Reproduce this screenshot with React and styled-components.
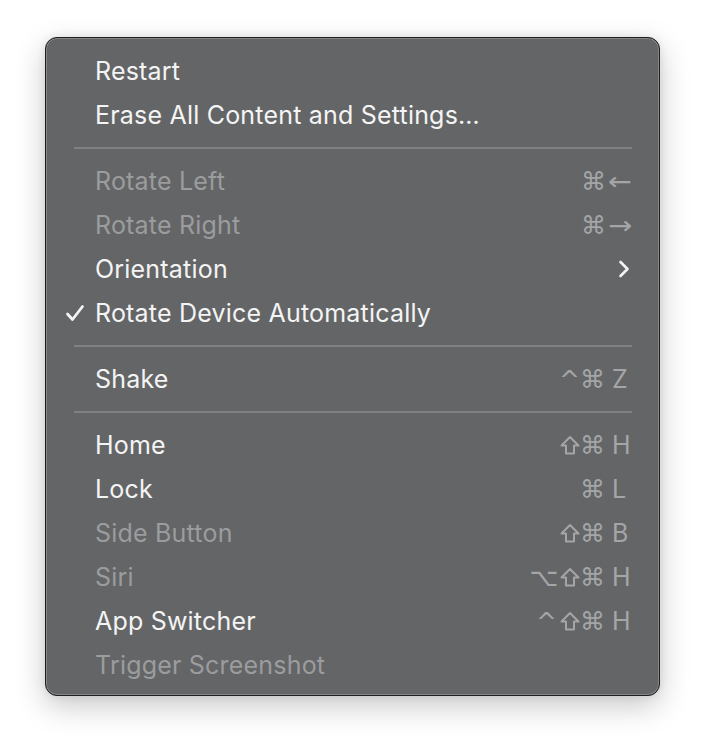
import styled, { createGlobalStyle } from 'styled-components'

const Global = createGlobalStyle`
    html, body {
        margin: 0;
        padding: 0;
        background: #ffffff;
    }
    body {
        font-family: Inter, "Noto Sans", "Liberation Sans", sans-serif;
    }
`

const Page = styled.div`
    width: 706px;
    height: 750px;
    padding: 37px 0 0 45px;
    box-sizing: border-box;
`

const Menu = styled.div`
    width: 615px;
    height: 659px;
    box-sizing: border-box;
    background: #646567;
    border: 1px solid #1f1f20;
    border-radius: 12px;
    box-shadow: inset 0 0 0 1px #85868a, 0 10px 30px rgba(0, 0, 0, 0.22), 0 0 8px rgba(0, 0, 0, 0.08);
    padding: 11px 0 8px;
    display: flex;
    flex-direction: column;
`

const Row = styled.div`
    height: 44px;
    display: flex;
    align-items: center;
    padding: 0 27px 0 49px;
    position: relative;
    color: ${p => (p.$disabled ? '#9b9c9e' : '#f4f4f4')};
    font-size: 25px;
    letter-spacing: 0.2px;
`

const Label = styled.span`
    flex: 1;
`

const Check = styled.svg`
    position: absolute;
    left: 19px;
    top: 13px;
`

const Separator = styled.div`
    height: 22px;
    display: flex;
    align-items: center;
    padding: 0 27px 0 28px;
    &::after {
        content: '';
        flex: 1;
        height: 2px;
        background: #808184;
    }
`

const Shortcut = styled.span`
    display: flex;
    align-items: center;
    gap: 2px;
    color: #a4a5a7;
    font-family: "DejaVu Sans", sans-serif;
    font-size: 25px;
    letter-spacing: 0;
`

const Key = styled.span`
    width: ${p => (p.$wide ? '26px' : '21px')};
    display: flex;
    justify-content: center;
`

const Letter = styled.span`
    width: 20px;
    margin-left: 7px;
    font-family: Inter, "Liberation Sans", sans-serif;
    font-size: 25px;
    text-align: left;
`

const Arrow = styled.span`
    width: 26px;
    text-align: right;
    transform: scaleX(1.15);
    transform-origin: right center;
`

const ShiftIcon = () => (
    <svg width="20" height="20" viewBox="0 0 20 20">
        <path d="M10 2 L18.5 10.5 L14 10.5 L14 18.5 L6 18.5 L6 10.5 L1.5 10.5 Z" fill="none" stroke="#a4a5a7" strokeWidth="2" strokeLinejoin="round" />
    </svg>
)

const Chevron = () => (
    <svg width="12" height="18" viewBox="0 0 12 18" style={{ marginRight: 2 }}>
        <path d="M2.5 2 L9.5 9 L2.5 16" fill="none" stroke="#f4f4f4" strokeWidth="2.6" strokeLinecap="round" strokeLinejoin="round" />
    </svg>
)

const items = [
    { label: 'Restart' },
    { label: 'Erase All Content and Settings…' },
    { sep: true },
    { label: 'Rotate Left', disabled: true, mods: ['⌘'], arrow: '←' },
    { label: 'Rotate Right', disabled: true, mods: ['⌘'], arrow: '→' },
    { label: 'Orientation', submenu: true },
    { label: 'Rotate Device Automatically', checked: true },
    { sep: true },
    { label: 'Shake', mods: ['^', '⌘'], key: 'Z' },
    { sep: true },
    { label: 'Home', mods: ['⇧', '⌘'], key: 'H' },
    { label: 'Lock', mods: ['⌘'], key: 'L' },
    { label: 'Side Button', disabled: true, mods: ['⇧', '⌘'], key: 'B' },
    { label: 'Siri', disabled: true, mods: ['⌥', '⇧', '⌘'], key: 'H' },
    { label: 'App Switcher', mods: ['^', '⇧', '⌘'], key: 'H' },
    { label: 'Trigger Screenshot', disabled: true },
]

const App = () => {
    return (
        <>
            <Global />
            <Page>
                <Menu>
                    {items.map((item, i) =>
                        item.sep ? (
                            <Separator key={i} />
                        ) : (
                            <Row key={i} $disabled={item.disabled}>
                                {item.checked && (
                                    <Check width="20" height="18" viewBox="0 0 20 18">
                                        <path d="M2.5 10 L7.5 15.5 L17.5 2.5" fill="none" stroke="#f4f4f4" strokeWidth="2.8" strokeLinecap="round" strokeLinejoin="round" />
                                    </Check>
                                )}
                                <Label>{item.label}</Label>
                                {item.submenu && <Chevron />}
                                {item.mods && (
                                    <Shortcut>
                                        {item.mods.map((m, j) => (
                                            <Key key={j} $wide={m === '⌥'}>
                                                {m === '⇧' ? <ShiftIcon /> : m}
                                            </Key>
                                        ))}
                                        {item.key && <Letter>{item.key}</Letter>}
                                        {item.arrow && <Arrow>{item.arrow}</Arrow>}
                                    </Shortcut>
                                )}
                            </Row>
                        )
                    )}
                </Menu>
            </Page>
        </>
    )
}

export default App
